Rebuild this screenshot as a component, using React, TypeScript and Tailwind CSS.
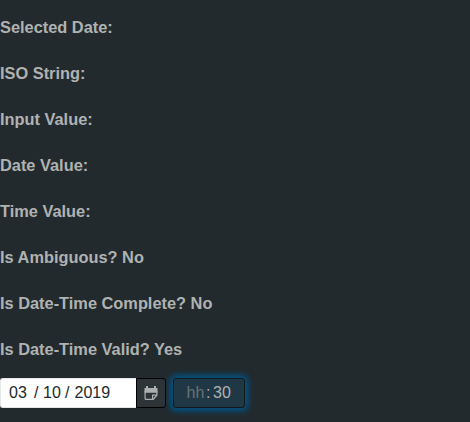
const rows = [
  "Selected Date:",
  "ISO String:",
  "Input Value:",
  "Date Value:",
  "Time Value:",
  "Is Ambiguous? No",
  "Is Date-Time Complete? No",
  "Is Date-Time Valid? Yes",
];

function CalendarIcon() {
  return (
    <svg width="14" height="14" viewBox="0 0 14 14" fill="#adafae">
      <path d="M2 0h2v2h6V0h2v2h1.500v4.500H.5V2H2z" />
      <path fillRule="evenodd" d="M.5 5h13v4.500L9.500 14H2A1.500 1.500 0 0 1 .5 12.500zM1.700 6.500v5.700q0 .6.6.6H8V9.200q0-.7.7-.7h3.600v-2zM9.200 9.700v2.600l2.400-2.600z" />
    </svg>
  );
}

export default function App() {
  return (
    <main className="h-[422px] w-full overflow-hidden bg-[#222a2d] pt-[4px] font-['Liberation_Sans',Arial,sans-serif] text-base text-[#b0b2b2]">
      {rows.map((text) => (
        <h3 key={text} className="h-[46px] text-[16.38px] leading-[46px] font-bold">{text}</h3>
      ))}
      <div className="mt-[6px] flex h-[30px] items-stretch leading-[30px]">
        <div className="flex w-[136px] rounded-l-[3px] border border-r-0 border-[#e4e6e7] bg-white pl-[8px] leading-[28px] text-[#22282b]">
          <span className="w-[25px]">03</span>
          <span className="w-[9px]">/</span>
          <span className="w-[22px]">10</span>
          <span className="w-[9.5px]">/</span>
          <span>2019</span>
        </div>
        <button className="flex w-[30px] items-center justify-center rounded-r-[3px] border border-black bg-[#2d3437]" aria-label="Open calendar">
          <CalendarIcon />
        </button>
        <div className="ml-[7px] flex w-[72px] rounded-[3px] border border-[#12191d] bg-[#203846] pl-[12.5px] leading-[28px] shadow-[0_0_6px_3px_#00558a]">
          <span className="w-[19.5px] text-[#687174]">hh</span>
          <span className="w-[7px]">:</span>
          <span>30</span>
        </div>
      </div>
    </main>
  );
}
